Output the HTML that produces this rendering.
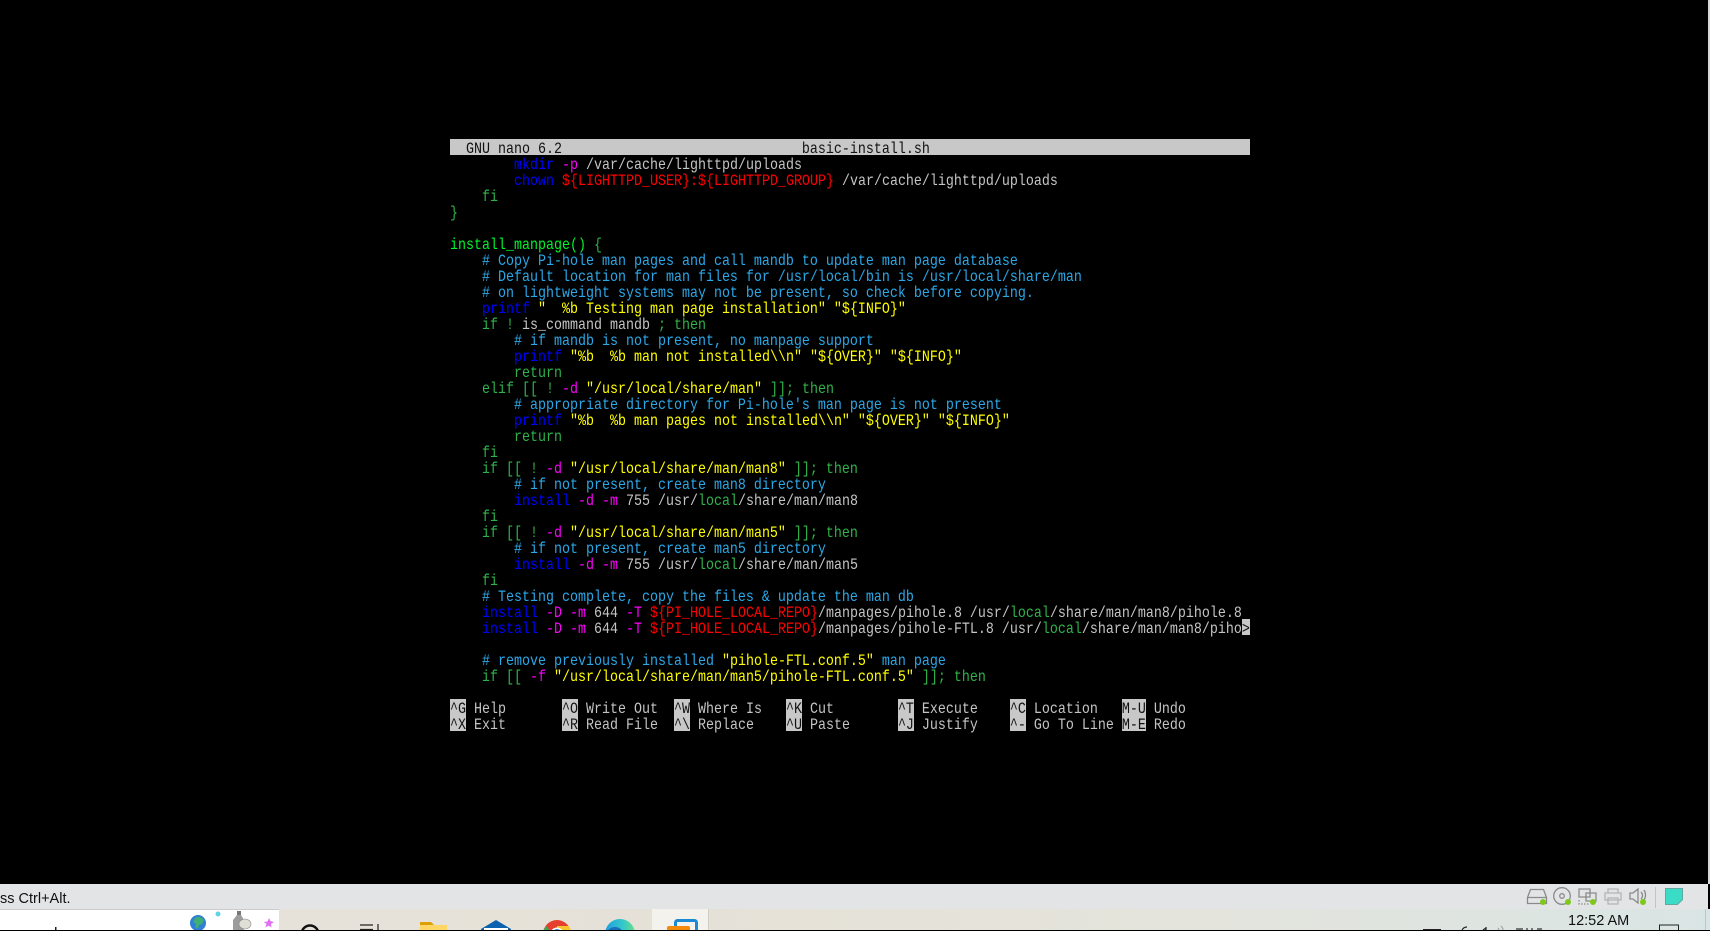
<!DOCTYPE html>
<html><head><meta charset="utf-8"><title>basic-install.sh</title>
<style>
html,body{margin:0;padding:0;background:#000;width:1710px;height:930px;overflow:hidden}
.l{position:absolute;left:450px;margin-top:3px;height:16px;line-height:16px;width:800px;white-space:pre;font-family:"Liberation Mono",monospace;font-size:13.333px;color:#c4c4c4;transform:scaleY(1.16);transform-origin:0 3px}
.b{color:#0000ff}.m{color:#ff00ff}.r{color:#ff0000}.y{color:#ffff00}.g{color:#2fb24a}.G{color:#00f52a}.c{color:#2ba8e8}
.i{background:#c8c8c8;color:#111}
.inv{position:absolute;background:#c8c8c8}
#status{position:absolute;left:0;top:884px;width:1708px;height:25px;background:#e3e4e6}
#st{position:absolute;left:0;top:887px;height:25px;font:14.5px/25px "Liberation Sans",sans-serif;color:#111;white-space:pre}
#task{position:absolute;left:0;top:909px;width:1710px;height:21px;background:linear-gradient(90deg,#e6e3dc 0%,#e6e1d7 40%,#e4e4dc 70%,#d9e5e4 100%)}
#white{position:absolute;left:0;top:909px;width:279px;height:21px;background:#fff;border-top:1px solid #ccc;box-sizing:border-box}
#active{position:absolute;left:652px;top:909px;width:56px;height:21px;background:#f3f2ed}
#clock{position:absolute;left:1568px;top:911px;font:14.5px/20px "Liberation Sans",sans-serif;color:#111;white-space:pre}
#strip{position:absolute;left:1708px;top:0;width:2px;height:884px;background:#d8d8d8}
svg{position:absolute;left:0;top:0}
</style></head><body>
<div class="inv" style="left:450px;top:139px;width:800px;height:16px"></div>
<div class="l" style="top:139px;color:#111">  GNU nano 6.2                              basic-install.sh</div>
<div class="l" style="top:155px">        <span class="b">mkdir</span> <span class="m">-p</span> /var/cache/lighttpd/uploads</div>
<div class="l" style="top:171px">        <span class="b">chown</span> <span class="r">${LIGHTTPD_USER}:${LIGHTTPD_GROUP}</span> /var/cache/lighttpd/uploads</div>
<div class="l g" style="top:187px">    fi</div>
<div class="l g" style="top:203px">}</div>
<div class="l" style="top:235px"><span class="G">install_manpage()</span><span class="g"> {</span></div>
<div class="l c" style="top:251px">    # Copy Pi-hole man pages and call mandb to update man page database</div>
<div class="l c" style="top:267px">    # Default location for man files for /usr/local/bin is /usr/local/share/man</div>
<div class="l c" style="top:283px">    # on lightweight systems may not be present, so check before copying.</div>
<div class="l" style="top:299px">    <span class="b">printf</span><span class="y"> "  %b Testing man page installation" "${INFO}"</span></div>
<div class="l" style="top:315px"><span class="g">    if ! </span>is_command mandb <span class="g">; then</span></div>
<div class="l c" style="top:331px">        # if mandb is not present, no manpage support</div>
<div class="l" style="top:347px">        <span class="b">printf</span><span class="y"> "%b  %b man not installed\\n" "${OVER}" "${INFO}"</span></div>
<div class="l g" style="top:363px">        return</div>
<div class="l" style="top:379px"><span class="g">    elif [[ ! </span><span class="m">-d</span><span class="y"> "/usr/local/share/man"</span><span class="g"> ]]; then</span></div>
<div class="l c" style="top:395px">        # appropriate directory for Pi-hole's man page is not present</div>
<div class="l" style="top:411px">        <span class="b">printf</span><span class="y"> "%b  %b man pages not installed\\n" "${OVER}" "${INFO}"</span></div>
<div class="l g" style="top:427px">        return</div>
<div class="l g" style="top:443px">    fi</div>
<div class="l" style="top:459px"><span class="g">    if [[ ! </span><span class="m">-d</span><span class="y"> "/usr/local/share/man/man8"</span><span class="g"> ]]; then</span></div>
<div class="l c" style="top:475px">        # if not present, create man8 directory</div>
<div class="l" style="top:491px">        <span class="b">install</span><span class="m"> -d -m </span>755 /usr/<span class="g">local</span>/share/man/man8</div>
<div class="l g" style="top:507px">    fi</div>
<div class="l" style="top:523px"><span class="g">    if [[ ! </span><span class="m">-d</span><span class="y"> "/usr/local/share/man/man5"</span><span class="g"> ]]; then</span></div>
<div class="l c" style="top:539px">        # if not present, create man5 directory</div>
<div class="l" style="top:555px">        <span class="b">install</span><span class="m"> -d -m </span>755 /usr/<span class="g">local</span>/share/man/man5</div>
<div class="l g" style="top:571px">    fi</div>
<div class="l c" style="top:587px">    # Testing complete, copy the files &amp; update the man db</div>
<div class="l" style="top:603px">    <span class="b">install</span><span class="m"> -D -m </span>644 <span class="m">-T </span><span class="r">${PI_HOLE_LOCAL_REPO}</span>/manpages/pihole.8 /usr/<span class="g">local</span>/share/man/man8/pihole.8</div>
<div class="inv" style="left:1242px;top:619px;width:8px;height:16px"></div>
<div class="l" style="top:619px">    <span class="b">install</span><span class="m"> -D -m </span>644 <span class="m">-T </span><span class="r">${PI_HOLE_LOCAL_REPO}</span>/manpages/pihole-FTL.8 /usr/<span class="g">local</span>/share/man/man8/piho<span style="color:#111">&gt;</span></div>
<div class="l" style="top:651px"><span class="c">    # remove previously installed </span><span class="y">"pihole-FTL.conf.5"</span><span class="c"> man page</span></div>
<div class="l" style="top:667px"><span class="g">    if [[ </span><span class="m">-f</span><span class="y"> "/usr/local/share/man/man5/pihole-FTL.conf.5"</span><span class="g"> ]]; then</span></div>

<div class="inv" style="left:450px;top:699px;width:16px;height:32px"></div>
<div class="inv" style="left:562px;top:699px;width:16px;height:32px"></div>
<div class="inv" style="left:674px;top:699px;width:16px;height:32px"></div>
<div class="inv" style="left:786px;top:699px;width:16px;height:32px"></div>
<div class="inv" style="left:898px;top:699px;width:16px;height:32px"></div>
<div class="inv" style="left:1010px;top:699px;width:16px;height:32px"></div>
<div class="inv" style="left:1122px;top:699px;width:24px;height:32px"></div>
<div class="l" style="top:699px"><span style="color:#111">^G</span> Help       <span style="color:#111">^O</span> Write Out  <span style="color:#111">^W</span> Where Is   <span style="color:#111">^K</span> Cut        <span style="color:#111">^T</span> Execute    <span style="color:#111">^C</span> Location   <span style="color:#111">M-U</span> Undo</div>
<div class="l" style="top:715px"><span style="color:#111">^X</span> Exit       <span style="color:#111">^R</span> Read File  <span style="color:#111">^\</span> Replace    <span style="color:#111">^U</span> Paste      <span style="color:#111">^J</span> Justify    <span style="color:#111">^-</span> Go To Line <span style="color:#111">M-E</span> Redo</div>

<div id="strip"></div>
<div id="status"></div>
<div id="st">ss Ctrl+Alt.</div>
<div id="task"></div>
<div id="white"></div>
<div id="active"></div>
<div id="clock">12:52 AM</div>

<svg width="1710" height="930" viewBox="0 0 1710 930" fill="none">
  <!-- left white-area ornaments -->
  <rect x="55" y="927" width="1.5" height="3" fill="#222"/>
  <circle cx="198" cy="923" r="8" fill="#2f7fd6"/>
  <path d="M195 918c3-2 7-1 9 2l-2 4-3 1-1 4-3-2 1-3-3-2z" fill="#3fae74"/>
  <circle cx="218" cy="914" r="2.5" fill="#5fd4e8"/>
  <path d="M233 930v-10l4-5h4l3 5v10z" fill="#9c9c9c"/>
  <ellipse cx="245" cy="924" rx="6" ry="5" fill="#dfdfd6" stroke="#888" stroke-width=".6"/>
  <path d="M237 911h4v4h-4z" fill="#777"/>
  <path d="M269 918l1.5 3 3.5 1-3 2 .5 3.500-3-2-3 2 1-4-3-1.500 4-.5z" fill="#e070f0"/>
  <!-- search, task view -->
  <circle cx="310" cy="934" r="8.500" stroke="#111" stroke-width="2.400"/>
  <path d="M360 925h13M360 929.500h13M378 924v6" stroke="#222" stroke-width="1.200"/>
  <!-- folder -->
  <path d="M420 922h11l3 3v5h-14z" fill="#dca100"/>
  <rect x="420" y="925" width="27" height="5" fill="#ffd766"/>
  <!-- mail -->
  <path d="M481 929l15-9 15 9v1h-30z" fill="#0b63b0"/>
  <rect x="484" y="928" width="24" height="2" fill="#fff"/>
  <!-- chrome -->
  <circle cx="557" cy="934" r="14" fill="#e5402f"/>
  <path d="M543 934a14 14 0 0 1 3-8l7 8z" fill="#3aa857"/>
  <path d="M557 926h12a14 14 0 0 1 2 8h-14z" fill="#f8c52c"/>
  <circle cx="557" cy="934" r="6.500" fill="#fff"/>
  <circle cx="557" cy="934" r="5" fill="#4a86e8"/>
  <!-- edge -->
  <defs><linearGradient id="e" x1="0" x2="1" y1="0" y2="0"><stop offset="0" stop-color="#1f9ee0"/><stop offset=".6" stop-color="#35c8c8"/><stop offset="1" stop-color="#66e08a"/></linearGradient></defs>
  <circle cx="620" cy="934" r="15" fill="url(#e)"/>
  <ellipse cx="615" cy="934" rx="8" ry="7" fill="#1a6fb8"/>
  <!-- active app -->
  <rect x="675.500" y="920.500" width="21" height="14" rx="2" stroke="#1a8ad4" stroke-width="3"/>
  <rect x="667" y="926" width="23" height="8" rx="2" fill="#f48a0c"/>
  <path d="M708.500 909v21" stroke="#cfcdc6"/>
  <!-- tray -->
  <g stroke="#8a8a8a" stroke-width="1.300">
    <path d="M1527.500 903.500h19v-6l-3-8h-13l-3 8zM1527.500 897.500h19"/>
    <circle cx="1562" cy="896" r="8.300"/>
    <circle cx="1562" cy="896" r="2.300"/>
    <path d="M1579 889h11v8h-11zM1586 893h10v8h-10z"/>
    <path d="M1579 900v4h10" stroke-dasharray="1.500 1.500"/>
  </g>
  <g stroke="#b4b4b4" stroke-width="1.300">
    <path d="M1608 893v-4h10v4M1605 893h16v7h-16zM1608 898h10v6h-10z"/>
  </g>
  <g stroke="#8a8a8a" stroke-width="1.300">
    <path d="M1630 893h3l5-4v14l-5-4h-3zM1641 892c2 2 2 5 0 7M1644 890c2 3 2 7 0 10"/>
  </g>
  <g fill="#7ec81a">
    <circle cx="1543" cy="902" r="3"/>
    <circle cx="1568" cy="902" r="3"/>
    <circle cx="1593" cy="902" r="3"/>
    <circle cx="1643" cy="902" r="3"/>
  </g>
  <path d="M1655.500 887v21" stroke="#c4c4c4"/>
  <path d="M1665.500 888.500h17v11l-5 5h-12z" fill="#3bdcc6" stroke="#62a8a0"/>
  <!-- tray bottom row -->
  <path d="M1423 929.500h18" stroke="#222"/>
  <path d="M1462 930c1-2 3-3 5-3M1486 930v-3M1483 930l3-2" stroke="#222" stroke-width="1.200"/>
  <path d="M1498 928c1 1 1 1 1 2M1501 926c1 1 2 3 2 4" stroke="#999"/>
  <path d="M1516 929h7M1527 928v2M1532 928v2M1537 929h5" stroke="#333" stroke-width="1.200"/>
  <path d="M1659.500 930v-5h19v5" stroke="#222"/>
  <path d="M1705.500 909v21" stroke="#bfc4c4"/>
</svg>
</body></html>
